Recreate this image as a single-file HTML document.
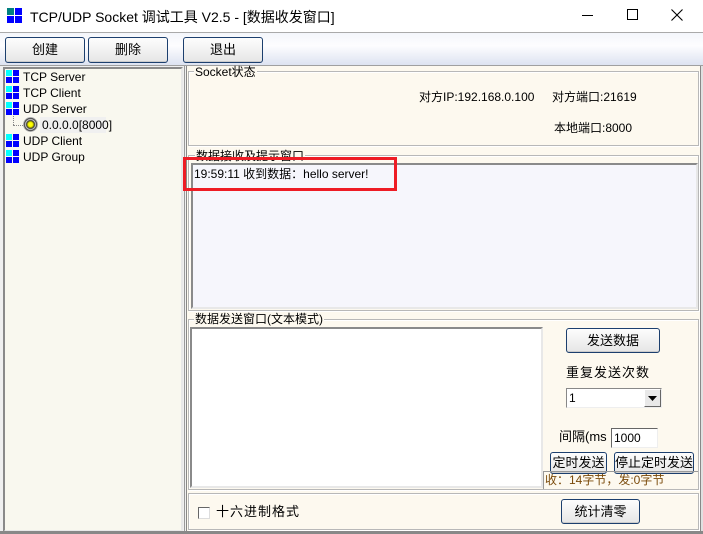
<!DOCTYPE html>
<html><head><meta charset="utf-8"><style>
*{margin:0;padding:0;box-sizing:border-box}
body{width:703px;height:534px;overflow:hidden;background:#f0f0f0;font-family:"Liberation Sans","Noto Sans CJK SC",sans-serif;font-size:12px;color:#000;position:relative}
.a{position:absolute}
.btn{position:absolute;border:1px solid #1c3f6e;border-radius:3px;background:linear-gradient(#fdfdfd,#e6e6e6);text-align:center;font-size:13px;box-shadow:inset 0 -1px 0 #ccc}
.grp{position:absolute;border:1px solid #b8b8b8;box-shadow:inset 1px 1px 0 #fff,1px 1px 0 #fff}
.lg{position:absolute;background:#fdf9ef;padding:0 1px;font-size:12px;line-height:12px}
.sunk{position:absolute;border:2px solid;border-color:#8a8a8a #e8e8e8 #e8e8e8 #8a8a8a}
.ic{position:absolute;width:14px;height:14px}
.ic i{position:absolute;width:6px;height:6px;background:#0000ff}
.t{position:absolute;font-size:12px;line-height:14px}
</style></head><body>
<div class="a" style="left:0;top:0;width:703px;height:32px;background:#fff"></div>
<div class="a" style="left:7px;top:8px;width:16px;height:16px">
<div class="a" style="left:0;top:0;width:7px;height:7px;background:#008080"></div>
<div class="a" style="left:8px;top:0;width:7px;height:7px;background:#0000ff"></div>
<div class="a" style="left:0;top:8px;width:7px;height:7px;background:#0000ff"></div>
<div class="a" style="left:8px;top:8px;width:7px;height:7px;background:#0000ff"></div></div>
<div class="a" style="left:30px;top:7px;font-size:14px">TCP/UDP Socket 调试工具 V2.5 - [数据收发窗口]</div>
<div class="a" style="left:582px;top:15px;width:11px;height:1px;background:#000"></div>
<div class="a" style="left:627px;top:9px;width:11px;height:11px;border:1px solid #000"></div>
<svg class="a" style="left:671px;top:9px" width="12" height="12"><path d="M0.5 0.5L11.5 11.5M11.5 0.5L0.5 11.5" stroke="#000" stroke-width="1.1"/></svg>
<div class="a" style="left:0;top:32px;width:703px;height:34px;background:linear-gradient(#f4f6fb,#fdfdff 40%,#dde3f1);border-top:1px solid #aaa;border-bottom:1px solid #a0a0a0"></div>
<div class="btn" style="left:5px;top:37px;width:80px;height:26px;line-height:24px">创建</div>
<div class="btn" style="left:88px;top:37px;width:80px;height:26px;line-height:24px">删除</div>
<div class="btn" style="left:183px;top:37px;width:80px;height:26px;line-height:24px">退出</div>
<div class="a" style="left:0;top:66px;width:185px;height:468px;background:#f0f0f0;border-right:1px solid #999"></div>
<div class="sunk" style="left:3px;top:67px;width:180px;height:465px;background:#f9f8ef"></div>
<div class="a" style="left:0;top:531px;width:703px;height:3px;background:#888"></div>
<div class="ic" style="left:6px;top:70px"><i style="left:0;top:0;background:#00ffff"></i><i style="left:7px;top:0"></i><i style="left:0;top:7px"></i><i style="left:7px;top:7px"></i></div>
<div class="t" style="left:23px;top:70px">TCP Server</div>
<div class="ic" style="left:6px;top:86px"><i style="left:0;top:0;background:#00ffff"></i><i style="left:7px;top:0"></i><i style="left:0;top:7px"></i><i style="left:7px;top:7px"></i></div>
<div class="t" style="left:23px;top:86px">TCP Client</div>
<div class="ic" style="left:6px;top:102px"><i style="left:0;top:0;background:#00ffff"></i><i style="left:7px;top:0"></i><i style="left:0;top:7px"></i><i style="left:7px;top:7px"></i></div>
<div class="t" style="left:23px;top:102px">UDP Server</div>
<div class="a" style="left:13px;top:116px;width:1px;height:9px;border-left:1px dotted #888"></div>
<div class="a" style="left:13px;top:125px;width:10px;border-top:1px dotted #888"></div>
<div class="a" style="left:23px;top:117px;width:15px;height:15px;border-radius:50%;background:radial-gradient(circle,#ff0 0 2px,#aa0 3px,#333 4px,#ddd 5px,#333 6px,#bbb 7px)"></div>
<div class="a" style="left:40px;top:117px;width:66px;height:16px;background:#f0f0f0"></div>
<div class="t" style="left:42px;top:118px">0.0.0.0[8000]</div>
<div class="ic" style="left:6px;top:134px"><i style="left:0;top:0;background:#00ffff"></i><i style="left:7px;top:0"></i><i style="left:0;top:7px"></i><i style="left:7px;top:7px"></i></div>
<div class="t" style="left:23px;top:134px">UDP Client</div>
<div class="ic" style="left:6px;top:150px"><i style="left:0;top:0;background:#00ffff"></i><i style="left:7px;top:0"></i><i style="left:0;top:7px"></i><i style="left:7px;top:7px"></i></div>
<div class="t" style="left:23px;top:150px">UDP Group</div>
<div class="a" style="left:186px;top:66px;width:517px;height:465px;background:#fdf9ef;border-left:1px solid #888"></div>
<div class="a" style="left:700px;top:66px;width:3px;height:465px;background:#e0e0e0;border-left:1px solid #888"></div>
<div class="grp" style="left:188px;top:71px;width:511px;height:75px"></div>
<div class="lg" style="left:194px;top:66px">Socket状态</div>
<div class="t" style="left:419px;top:90px">对方IP:192.168.0.100</div>
<div class="t" style="left:552px;top:90px">对方端口:21619</div>
<div class="t" style="left:554px;top:121px">本地端口:8000</div>
<div class="grp" style="left:188px;top:155px;width:511px;height:156px"></div>
<div class="lg" style="left:195px;top:150px">数据接收及提示窗口</div>
<div class="sunk" style="left:191px;top:163px;width:507px;height:146px;background:#f6f6fc"></div>
<div class="t" style="left:194px;top:167px">19:59:11 收到数据：hello server!</div>
<div class="a" style="left:183px;top:157px;width:214px;height:34px;border:3px solid #ee1c25"></div>
<div class="grp" style="left:188px;top:319px;width:511px;height:171px"></div>
<div class="lg" style="left:194px;top:313px">数据发送窗口(文本模式)</div>
<div class="sunk" style="left:190px;top:327px;width:353px;height:161px;background:#fff"></div>
<div class="btn" style="left:566px;top:328px;width:94px;height:25px;line-height:23px">发送数据</div>
<div class="t" style="left:566px;top:366px;font-size:13px;letter-spacing:1px">重复发送次数</div>
<div class="a" style="left:566px;top:388px;width:96px;height:20px;background:#fff;border:1px solid;border-color:#888 #eee #eee #888"></div>
<div class="t" style="left:569px;top:391px">1</div>
<div class="a" style="left:644px;top:389px;width:17px;height:18px;background:#e8e8e8;border:1px solid;border-color:#fff #666 #666 #fff"></div>
<svg class="a" style="left:648px;top:396px" width="9" height="5"><path d="M0 0H9L4.5 5Z" fill="#000"/></svg>
<div class="t" style="left:559px;top:430px;font-size:13px">间隔(ms</div>
<div class="a" style="left:611px;top:428px;width:47px;height:20px;background:#fff;border:1px solid;border-color:#666 #eee #eee #666"></div>
<div class="t" style="left:614px;top:431px">1000</div>
<div class="btn" style="left:550px;top:452px;width:57px;height:22px;line-height:20px">定时发送</div>
<div class="btn" style="left:614px;top:452px;width:80px;height:22px;line-height:20px">停止定时发送</div>
<div class="a" style="left:543px;top:471px;width:155px;height:18px;border-left:1px solid #999;border-top:1px solid #999"></div>
<div class="t" style="left:545px;top:473px;color:#7a4a0a">收：14字节，发:0字节</div>
<div class="grp" style="left:188px;top:493px;width:511px;height:37px"></div>
<div class="a" style="left:198px;top:507px;width:12px;height:12px;background:#fff;border:1px solid;border-color:#666 #ddd #ddd #666"></div>
<div class="t" style="left:216px;top:505px;font-size:13px;letter-spacing:1px">十六进制格式</div>
<div class="btn" style="left:561px;top:499px;width:79px;height:25px;line-height:23px">统计清零</div>
</body></html>
